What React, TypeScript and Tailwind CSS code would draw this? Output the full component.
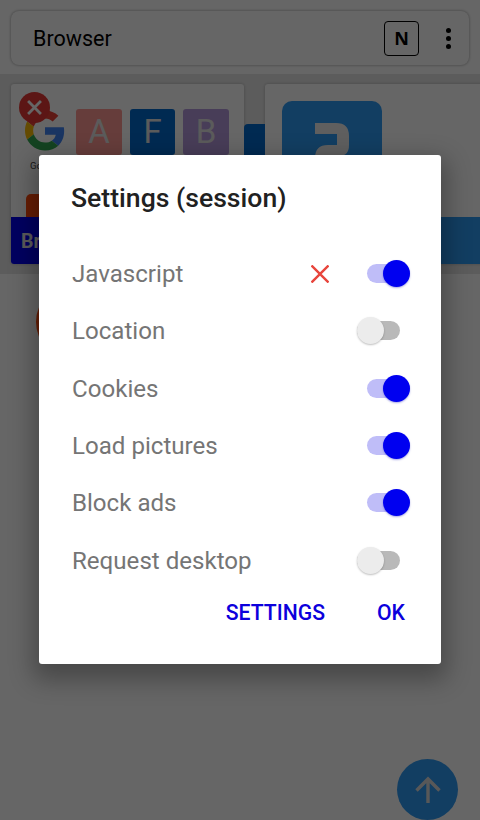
import { useState } from "react";

interface Setting {
  id: string;
  label: string;
  enabled: boolean;
  blocked?: boolean;
}

const initialSettings: Setting[] = [
  { id: "javascript", label: "Javascript", enabled: true, blocked: true },
  { id: "location", label: "Location", enabled: false },
  { id: "cookies", label: "Cookies", enabled: true },
  { id: "pictures", label: "Load pictures", enabled: true },
  { id: "ads", label: "Block ads", enabled: true },
  { id: "desktop", label: "Request desktop", enabled: false },
];

const Toggle = ({ checked, onChange }: { checked: boolean; onChange: () => void }) => (
  <button
    role="switch"
    aria-checked={checked}
    onClick={onChange}
    className={`flex h-[27px] w-[53px] items-center ${checked ? "justify-end" : "justify-start"}`}
  >
    {checked ? (
      <span className="flex h-[19px] w-[43px] items-center justify-end rounded-full bg-[#bfbdf8]">
        <span className="h-[27px] w-[27px] shrink-0 rounded-full bg-[#0000f0] shadow-[0_1px_2px_rgba(0,0,180,0.35)]" />
      </span>
    ) : (
      <span className="flex h-[19px] w-[43px] items-center rounded-full bg-[#b9b9b9]">
        <span className="h-[27px] w-[27px] shrink-0 rounded-full bg-[#ececec] shadow-[0_1px_2px_rgba(0,0,0,0.25)]" />
      </span>
    )}
  </button>
);

const GoogleLogo = () => (
  <svg viewBox="0 0 48 48" className="h-[41px] w-[40px]">
    <path fill="#ea4335" d="M24 9.5c3.54 0 6.71 1.22 9.21 3.6l6.85-6.85C35.9 2.38 30.47 0 24 0 14.62 0 6.51 5.38 2.56 13.22l7.98 6.19C12.43 13.72 17.74 9.5 24 9.5z" />
    <path fill="#4285f4" d="M46.98 24.55c0-1.57-.15-3.09-.38-4.55H24v9.02h12.94c-.58 2.96-2.26 5.48-4.78 7.18l7.73 6c4.51-4.18 7.09-10.36 7.09-17.65z" />
    <path fill="#fbbc05" d="M10.53 28.59c-.48-1.45-.76-2.99-.76-4.59s.27-3.14.76-4.59l-7.98-6.19C.92 16.46 0 20.12 0 24c0 3.88.92 7.54 2.56 10.78l7.97-6.19z" />
    <path fill="#34a853" d="M24 48c6.48 0 11.93-2.13 15.89-5.81l-7.73-6c-2.15 1.45-4.92 2.3-8.16 2.3-6.26 0-11.57-4.22-13.47-9.91l-7.98 6.19C6.51 42.62 14.62 48 24 48z" />
  </svg>
);

const TopBar = () => (
  <header className="px-[11px] pt-[11px] pb-[9px]">
    <div className="flex h-[54px] items-center rounded-lg bg-white pl-[22px] shadow-[0_0_3px_rgba(0,0,0,0.4)]">
      <span className="flex-1 pt-[2px] text-[21.5px] text-black">Browser</span>
      <span className="flex h-[35px] w-[35px] items-center justify-center rounded-[4px] border-[1.5px] border-black font-[Open_Sans,sans-serif] text-[18px] leading-none font-bold text-black">
        N
      </span>
      <div className="mr-[18px] ml-[27px] flex flex-col gap-[3px]">
        <span className="h-[5px] w-[5px] rounded-full bg-black" />
        <span className="h-[5px] w-[5px] rounded-full bg-black" />
        <span className="h-[5px] w-[5px] rounded-full bg-black" />
      </div>
    </div>
  </header>
);

const TabPreviews = () => (
  <div className="flex h-[200px] gap-[21px] overflow-hidden bg-[#e6e6e6] pt-[10px] pl-[11px]">
    <div className="relative flex h-[180px] w-[233px] shrink-0 flex-col rounded-[3px] bg-white shadow-[0_0_3px_rgba(0,0,0,0.25)]">
      <div className="flex gap-[8px] pt-[25px] pl-[65px] text-[33px] leading-[46px] text-[#e4e4e4]">
        <span className="h-[46px] w-[46px] rounded-[3px] bg-[#ff9a94] text-center">A</span>
        <span className="h-[46px] w-[45px] rounded-[3px] bg-[#006ace] text-center">F</span>
        <span className="h-[46px] w-[46px] rounded-[3px] bg-[#b598dc] text-center">B</span>
      </div>
      <span className="mt-[4px] ml-[19px] text-[9.5px] leading-[14px] text-[#444]">Google</span>
      <span className="mt-[21px] ml-[15px] h-[23px] w-[30px] rounded-t-[5px] bg-[#ff4a0a]" />
      <div className="flex h-[47px] items-center rounded-b-[3px] bg-[#0000f0] pt-[2px] pl-[10px] text-[19.5px] font-bold text-[#e4e4e4]">
        Browser
      </div>
      <span className="absolute top-[26px] left-[14px]">
        <GoogleLogo />
      </span>
      <span className="absolute top-[8px] left-[8px] flex h-[31px] w-[31px] items-center justify-center rounded-full bg-[#e53935]">
        <svg viewBox="0 0 14 14" className="h-[15px] w-[15px]" stroke="white" strokeWidth="2.6">
          <path d="M1 1L13 13M13 1L1 13" />
        </svg>
      </span>
      <span className="absolute top-[40px] left-[233px] h-[40px] w-[21px] rounded-tl-[4px] bg-[#006ace]" />
    </div>
    <div className="flex h-[180px] w-[233px] shrink-0 flex-col justify-between rounded-[3px] bg-white shadow-[0_0_3px_rgba(0,0,0,0.25)]">
      <svg viewBox="0 0 100 100" className="mt-[17px] ml-[17px] h-[100px] w-[100px]">
        <rect width="100" height="100" rx="10" fill="#2f9bf4" />
        <path d="M33 22H54Q67 22 67 35V44Q67 55 57 55H49Q45 55 45 60V62H33V57Q33 44 46 44H55V33H33Z" fill="#eee" />
      </svg>
      <div className="h-[47px] rounded-b-[3px] bg-[#2f9bf4]" />
    </div>
  </div>
);

export default function App() {
  const [settings, setSettings] = useState<Setting[]>(initialSettings);

  const toggle = (id: string) => {
    setSettings(prev => prev.map(s => (s.id === id ? { ...s, enabled: !s.enabled } : s)));
  };

  return (
    <div className="relative h-[820px] w-[480px] overflow-hidden bg-white font-[Roboto,sans-serif]">
      <TopBar />
      <TabPreviews />
      <span className="absolute top-[285px] left-[36px] h-[74px] w-[74px] rounded-full bg-[#ff4a0a]" />
      <button className="absolute top-[759px] left-[397px] flex h-[61px] w-[61px] items-center justify-center rounded-full bg-[#2f9bf4]">
        <svg viewBox="0 0 26 28" className="h-[28px] w-[26px]" fill="none" stroke="#ddd" strokeWidth="3.4">
          <path d="M13 27V3M1.5 14.5L13 3L24.5 14.5" />
        </svg>
      </button>

      {/* Dialog */}
      <div className="absolute inset-0 bg-black/60 px-[39px] pt-[155px]">
        <div
          role="dialog"
          className="flex h-[509px] w-[402px] flex-col rounded-[3px] bg-white shadow-[0_10px_24px_6px_rgba(0,0,0,0.3)]"
        >
          <h2 className="pt-[26px] pl-[32px] text-[26.6px] leading-[34px] font-medium text-[#212121]">
            Settings (session)
          </h2>
          <div className="mt-[30px] pr-[31px] pl-[33px]">
            {settings.map(s => (
              <div key={s.id} className="flex h-[57.3px] items-center">
                <span className="flex-1 pt-px text-[24.1px] text-[#757575]">{s.label}</span>
                {s.blocked && (
                  <svg viewBox="0 0 18 18" className="mr-[28px] h-[18px] w-[18px]" stroke="#e8453c" strokeWidth="2.4">
                    <path d="M0.5 0.5L17.5 17.5M17.5 0.5L0.5 17.5" />
                  </svg>
                )}
                <Toggle checked={s.enabled} onChange={() => toggle(s.id)} />
              </div>
            ))}
          </div>
          <div className="mt-[9px] flex justify-end gap-[52px] pr-[36px] text-[21.2px] leading-[30px] font-medium text-[#0c00dc]">
            <button>SETTINGS</button>
            <button>OK</button>
          </div>
        </div>
      </div>
    </div>
  );
}
